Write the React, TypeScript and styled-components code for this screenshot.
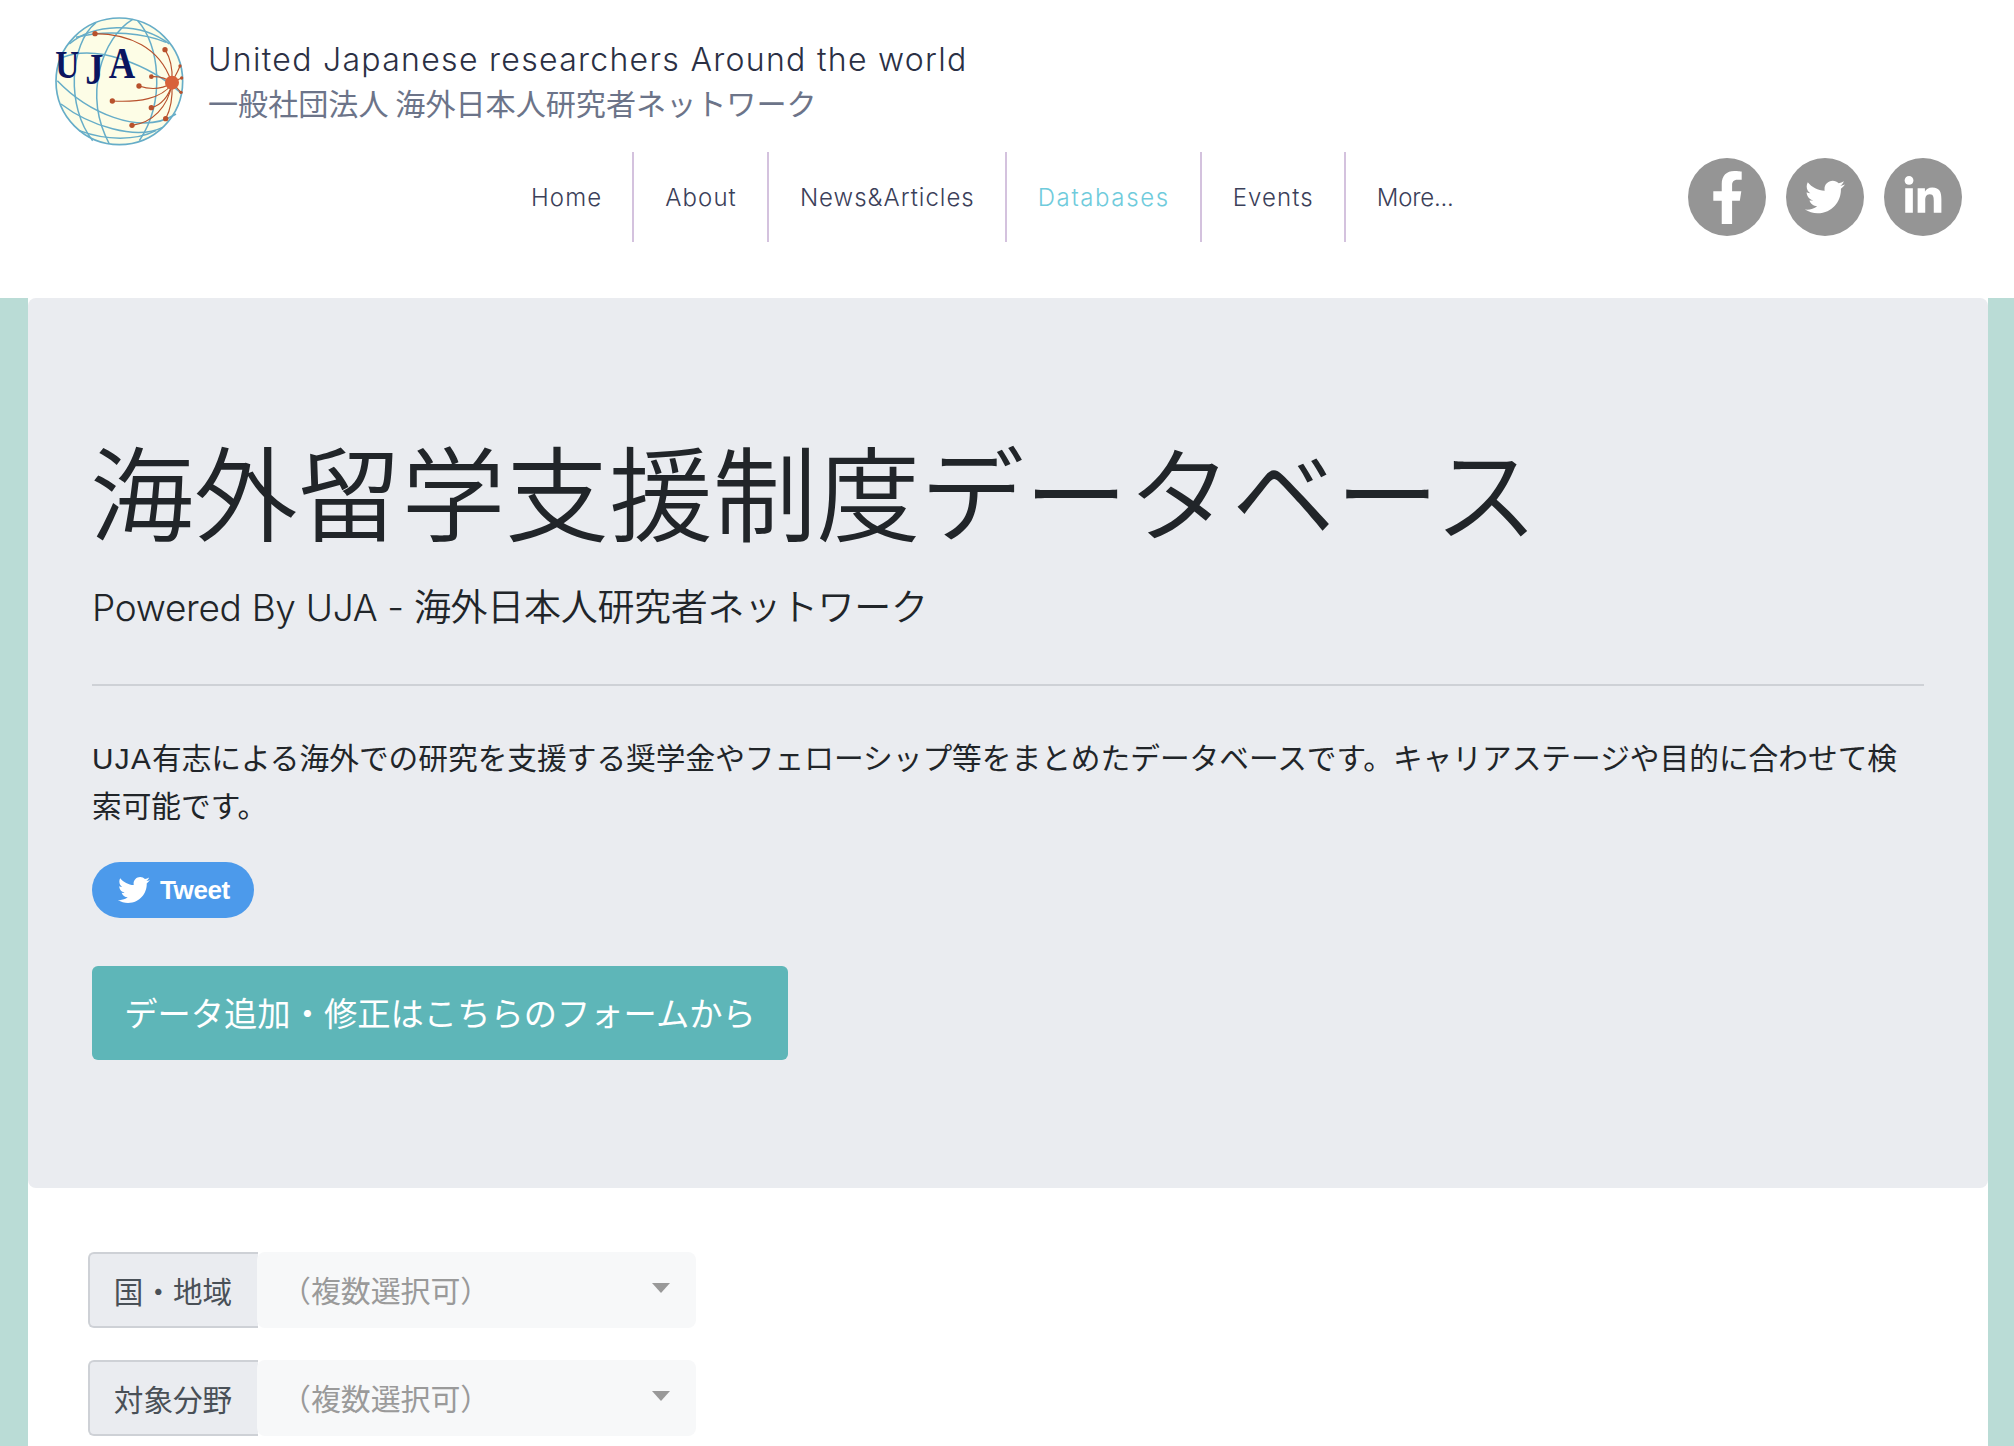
import React from "react";
import styled, { createGlobalStyle } from "styled-components";
import { FaFacebookF, FaTwitter, FaLinkedinIn } from "react-icons/fa";

const Global = createGlobalStyle`
  html, body { margin: 0; padding: 0; background: #fff; height: 1446px; overflow: hidden; }
  body { font-family: "Liberation Sans", "Noto Sans CJK JP", sans-serif; color: #212529; }
  * { box-sizing: border-box; }
`;
const Header = styled.header`
  background: #fff;
  height: 298px;
  padding: 14px 52px 0 52px;
`;
const Brand = styled.div`
  display: flex;
  align-items: flex-start;
  gap: 20px;
  height: 138px;
`;
const BrandText = styled.div`
  display: flex;
  flex-direction: column;
  padding-top: 25px;
`;
const Tagline = styled.div`
  font-family: "Inter", "Noto Sans CJK JP", sans-serif;
  font-weight: 300;
  font-size: 32px;
  letter-spacing: 1.3px;
  line-height: 42px;
  color: #2b3044;
`;
const OrgName = styled.div`
  font-family: "Noto Sans CJK JP", sans-serif;
  font-size: 30.1px;
  line-height: 44px;
  margin-top: -1px;
  color: #6c7489;
`;
const NavRow = styled.div`
  display: flex;
  justify-content: space-between;
  align-items: center;
  height: 90px;
  padding-left: 448px;
`;
const Nav = styled.nav`
  display: flex;
  height: 90px;
`;
const NavItem = styled.a<{ $active?: boolean; $first?: boolean; $tracking?: number }>`
  display: flex;
  align-items: center;
  padding: 0 30px 0 31px;
  font-family: "Inter", sans-serif;
  font-weight: 300;
  font-size: 24px;
  letter-spacing: ${(p) => p.$tracking ?? 1.1}px;
  color: ${(p) => (p.$active ? "#6fcbdc" : "#3b4059")};
  border-left: ${(p) => (p.$first ? "none" : "2px solid #d4c2de")};
`;
const Socials = styled.div`
  display: flex;
  gap: 20px;
`;
const Social = styled.a`
  width: 78px;
  height: 78px;
  border-radius: 50%;
  background: #959595;
  color: #fff;
  display: flex;
  align-items: center;
  justify-content: center;
`;
const Frame = styled.div`
  background: #badcd6;
  padding: 0 26px 0 28px;
  height: 1148px;
`;
const Content = styled.main`
  background: #fff;
  height: 100%;
`;
const Jumbotron = styled.section`
  background: #eaecf0;
  border-radius: 8px;
  height: 890px;
  padding: 116px 64px 0;
`;
const Title = styled.h1`
  margin: 0 0 0 -2px;
  font-family: "Noto Sans CJK JP", sans-serif;
  font-weight: 350;
  font-size: 103.8px;
  line-height: 150px;
  white-space: nowrap;
`;
const Lead = styled.p`
  margin: 13px 0 0;
  height: 56px;
  font-family: "Inter", "Noto Sans CJK JP", sans-serif;
  font-size: 37px;
  line-height: 56px;
  letter-spacing: -0.3px;
  font-weight: 300;
`;
const LeadJa = styled.span`
  font-family: "Noto Sans CJK JP", sans-serif;
  font-weight: 350;
`;
const Rule = styled.hr`
  border: 0;
  border-top: 2px solid #ced1d6;
  margin: 51px 0 0;
`;
const Body = styled.p`
  margin: 49px 0 0;
  font-size: 29.7px;
  line-height: 48px;
`;
const BodyLatin = styled.span`
  letter-spacing: 1.3px;
`;
const TweetButton = styled.a`
  display: inline-flex;
  align-items: center;
  gap: 10px;
  width: 162px;
  height: 56px;
  margin-top: 31px;
  padding-left: 26px;
  border-radius: 28px;
  background: #4c9aeb;
  color: #fff;
  font-weight: 700;
  font-size: 26px;
  letter-spacing: -0.4px;
`;
const FormLink = styled.a`
  display: flex;
  align-items: center;
  justify-content: center;
  width: 696px;
  height: 94px;
  margin-top: 48px;
  padding-bottom: 3px;
  border-radius: 6px;
  background: #5eb6b8;
  color: #fff;
  font-family: "Noto Sans CJK JP", sans-serif;
  font-weight: 400;
  font-size: 33.3px;
`;
const Filters = styled.div`
  display: flex;
  flex-direction: column;
  gap: 32px;
  padding: 64px 0 0 60px;
`;
const Filter = styled.div`
  display: flex;
  width: 608px;
  height: 76px;
`;
const FilterLabel = styled.div`
  width: 170px;
  display: flex;
  align-items: center;
  justify-content: center;
  padding-right: 2px;
  background: #eaecf0;
  border: 2px solid #ced1d6;
  border-right: 0;
  border-radius: 6px 0 0 6px;
  font-family: "Noto Sans CJK JP", sans-serif;
  font-size: 29.6px;
  color: #495057;
`;
const FilterSelect = styled.div`
  flex: 1;
  display: flex;
  align-items: center;
  justify-content: space-between;
  background: #f7f8f9;
  border-radius: 8px;
  margin-left: -1px;
  padding: 0 26px 0 24px;
  font-family: "Noto Sans CJK JP", sans-serif;
  font-size: 29.9px;
  color: #9a9a9a;
`;
const SelectText = styled.span`
  margin-top: -2px;
`;
const Caret = styled.span`
  width: 0;
  height: 0;
  border-left: 9px solid transparent;
  border-right: 9px solid transparent;
  border-top: 10px solid #999;
  margin-top: -4px;
`;

const Logo = () => {
  const blue = "#66adc8";
  const red = "#b8512c";
  const nodes: [number, number, number, string][] = [
    [197, 99, 8, "M197 99C300 100 390 140 425 240"],
    [407, 147, 8, "M407 147C425 175 430 205 428 240"],
    [452, 196, 5, "M452 196C445 215 438 225 430 240"],
    [457, 232, 5, "M457 232L430 244"],
    [455, 275, 5, "M455 275L430 248"],
    [409, 354, 8, "M409 354C425 325 430 290 428 250"],
    [308, 374, 8, "M308 374C370 365 415 320 428 250"],
    [366, 321, 8, "M366 321C395 315 420 285 428 250"],
    [249, 301, 8, "M249 301C330 305 395 295 428 250"],
    [329, 256, 8, "M329 256C365 268 400 265 428 246"],
    [366, 228, 7, "M366 228C390 226 410 232 428 246"],
  ];
  return (
    <svg width="136" height="135" viewBox="68 40 408 405" aria-label="UJA">
      <circle cx="270" cy="242" r="190" fill="#fdfde6" stroke={blue} strokeWidth="5" />
      <g fill="none" stroke={blue} strokeWidth="4.5">
        <path d="M310 56C220 110 160 280 240 430" />
        <path d="M200 66C120 130 110 320 190 420" />
        <path d="M325 60C390 130 410 300 330 420" />
        <path d="M120 130C190 70 330 60 420 130" />
        <path d="M84 240C170 330 330 410 440 340" />
        <path d="M100 170C200 130 360 190 458 280" />
        <path d="M95 310C180 375 320 420 400 380" />
        <path d="M140 110C240 85 350 100 410 125" />
        <path d="M150 390C230 420 320 420 380 390" />
      </g>
      <g fill="none" stroke={red} strokeWidth="3.5">
        {nodes.map((n) => (
          <path key={n[3]} d={n[3]} />
        ))}
      </g>
      <g fill={red}>
        {nodes.map((n) => (
          <circle key={n[3]} cx={n[0]} cy={n[1]} r={n[2]} />
        ))}
      </g>
      <circle cx="428" cy="246" r="21" fill="#d8623a" />
      <g fontFamily="Liberation Serif, serif" fontWeight="700" fill="#0b1560">
        <text transform="translate(78 232) scale(1 1.2)" fontSize="100">U</text>
        <text transform="translate(168 250) scale(1 1.2)" fontSize="110">J</text>
        <text transform="translate(238 232) scale(1 1.2)" fontSize="110">A</text>
      </g>
    </svg>
  );
};

const Filterset = ["国・地域", "対象分野"];

export default function App() {
  return (
    <>
      <Global />
      <Header>
        <Brand>
          <Logo />
          <BrandText>
            <Tagline>United Japanese researchers Around the world</Tagline>
            <OrgName>一般社団法人 海外日本人研究者ネットワーク</OrgName>
          </BrandText>
        </Brand>
        <NavRow>
          <Nav>
            <NavItem $first>Home</NavItem>
            <NavItem>About</NavItem>
            <NavItem $tracking={1}>News&amp;Articles</NavItem>
            <NavItem $active $tracking={1.6}>Databases</NavItem>
            <NavItem>Events</NavItem>
            <NavItem $tracking={-0.2}>More...</NavItem>
          </Nav>
          <Socials>
            <Social><FaFacebookF size={53} /></Social>
            <Social><FaTwitter size={40} /></Social>
            <Social><FaLinkedinIn size={42} /></Social>
          </Socials>
        </NavRow>
      </Header>
      <Frame>
        <Content>
          <Jumbotron>
            <Title>海外留学支援制度データベース</Title>
            <Lead>Powered By UJA - <LeadJa>海外日本人研究者ネットワーク</LeadJa></Lead>
            <Rule />
            <Body><BodyLatin>UJA</BodyLatin>有志による海外での研究を支援する奨学金やフェローシップ等をまとめたデータベースです。キャリアステージや目的に合わせて検索可能です。</Body>
            <TweetButton><FaTwitter size={32} />Tweet</TweetButton>
            <FormLink>データ追加・修正はこちらのフォームから</FormLink>
          </Jumbotron>
          <Filters>
            {Filterset.map((label) => (
              <Filter key={label}>
                <FilterLabel>{label}</FilterLabel>
                <FilterSelect>
                  <SelectText>（複数選択可）</SelectText>
                  <Caret />
                </FilterSelect>
              </Filter>
            ))}
          </Filters>
        </Content>
      </Frame>
    </>
  );
}
